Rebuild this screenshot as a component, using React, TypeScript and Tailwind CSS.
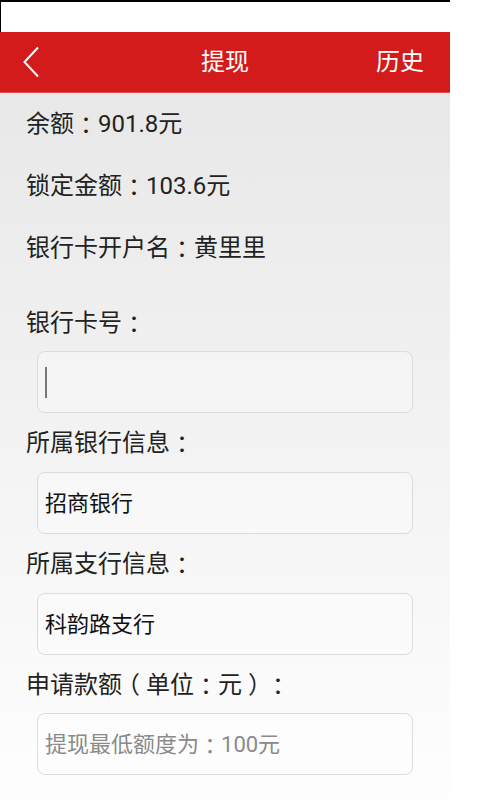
const PUNCT = /([：（）])/;

// fullwidth punctuation centred in its cell, like the Android fallback font
function Zh({ text }: { text: string }) {
  return (
    <>
      {text.split(PUNCT).map((part, i) =>
        part === "：" ? (
          <span key={i} className="font-['Noto_Sans_CJK_JP',sans-serif]">
            {part}
          </span>
        ) : part === "（" || part === "）" ? (
          <span key={i} className="px-[0.25em] [font-feature-settings:'halt']">
            {part}
          </span>
        ) : (
          <span key={i}>{part}</span>
        )
      )}
    </>
  );
}

function Label({ text, className = "" }: { text: string; className?: string }) {
  return (
    <div className={`flex items-center text-[24px] whitespace-pre ${className}`}>
      <Zh text={text} />
    </div>
  );
}

function Field({ children, className = "" }: { children: React.ReactNode; className?: string }) {
  return (
    <div
      className={`ml-[11px] flex h-[62px] w-[376px] items-center rounded-[8px] border border-[#dcdcdc] bg-white/30 pl-[7px] text-[22px] whitespace-pre ${className}`}
    >
      {children}
    </div>
  );
}

export default function App() {
  return (
    <div className="flex h-[800px] w-[482px] bg-white font-['Roboto','Noto_Sans_CJK_SC',sans-serif] [text-spacing-trim:space-all]">
      <div className="flex w-[450px] flex-col">
        {/* status area */}
        <div className="h-[32px] border-t-2 border-l border-black bg-white" />

        {/* title bar */}
        <header className="relative flex h-[61px] items-center justify-center border-b border-[#e44a44] bg-[#d41b1b]">
          <button className="absolute left-[22px] top-[14px]">
            <svg width="20" height="32" viewBox="0 0 20 32" fill="none">
              <path d="M16 1.5 L2.5 16 L16 30.5" stroke="white" strokeWidth="2" />
            </svg>
          </button>
          <h1 className="text-[24px] leading-none text-white">提现</h1>
          <span className="absolute right-[26px] text-[24px] leading-none text-white">历史</span>
        </header>

        {/* body */}
        <main className="flex flex-1 flex-col bg-gradient-to-b from-[#e8e8e8] to-[#fefefe] pl-[26px] text-[#222]">
          <Label className="h-[62px]" text="余额：901.8元" />
          <Label className="h-[62px]" text="锁定金额：103.6元" />
          <Label className="h-[62px]" text="银行卡开户名：黄里里" />

          <Label className="mt-[24px] h-[40px]" text="银行卡号：" />
          <Field className="mt-[8px] pl-[6px]">
            <span className="h-[31px] w-[1.5px] bg-[#777]" />
          </Field>

          <Label className="mt-[10px] h-[40px]" text="所属银行信息：" />
          <Field className="mt-[9px] text-[#111]">招商银行</Field>

          <Label className="mt-[10px] h-[40px]" text="所属支行信息：" />
          <Field className="mt-[9px] text-[#111]">科韵路支行</Field>

          <Label className="mt-[10px] h-[40px]" text="申请款额（单位：元）：" />
          <Field className="mt-[8px] text-[#8a8a8a]">
            <Zh text="提现最低额度为：100元" />
          </Field>
        </main>
      </div>
      <div className="flex-1 bg-white" />
    </div>
  );
}
